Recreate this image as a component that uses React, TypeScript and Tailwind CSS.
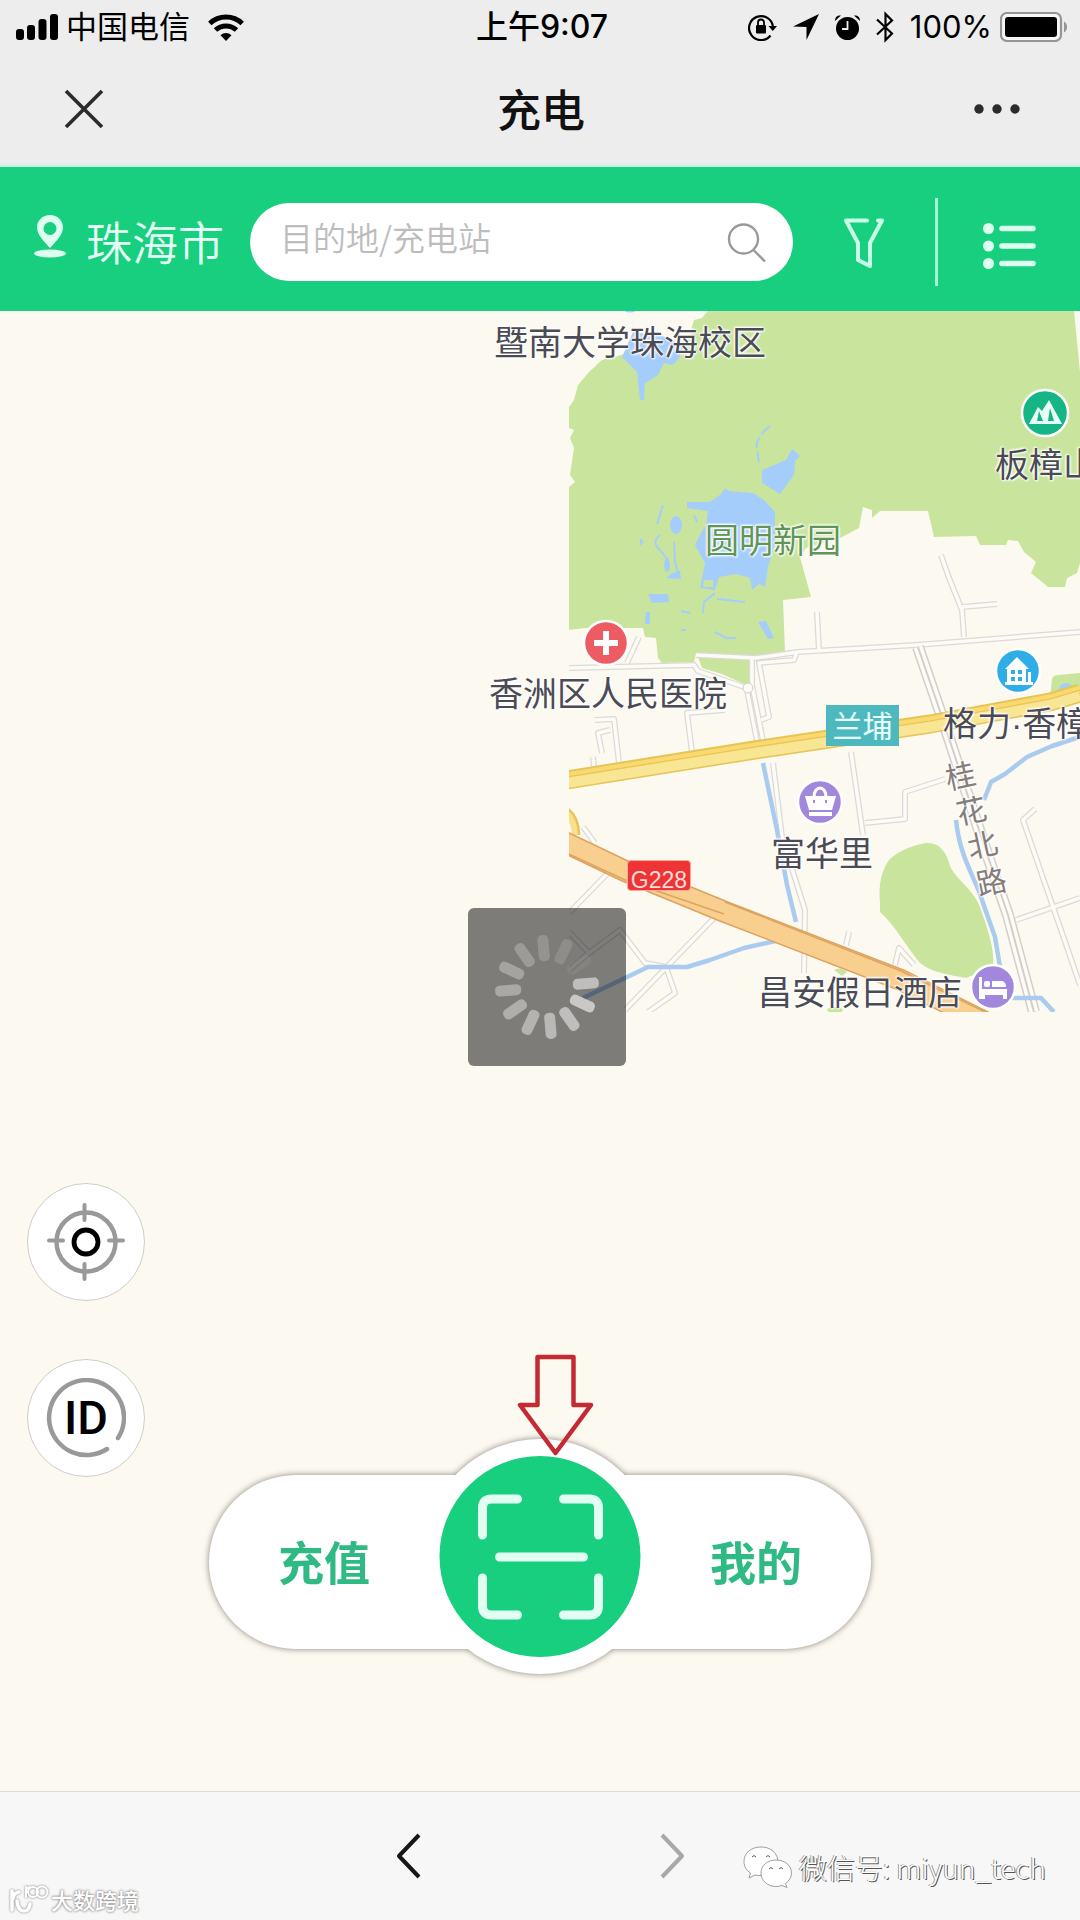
const labelShadow =
  "[text-shadow:0_0_2px_#fff,0_0_3px_#fff,1px_1px_2px_#fff,-1px_-1px_2px_#fff]";

const places = [
  { name: "暨南大学珠海校区", className: "left-[494px] top-[13px] text-[#4b4b55]" },
  { name: "板樟山", className: "left-[995px] top-[135px] text-[#4b4b55]" },
  { name: "圆明新园", className: "left-[705px] top-[211px] text-[#5f9557]" },
  { name: "香洲区人民医院", className: "left-[489px] top-[364px] text-[#4b4b55]" },
  {
    name: "格力·香樟",
    className:
      "left-[943px] top-[396px] font-['Liberation_Sans','Noto_Sans_CJK_SC',sans-serif] text-[#4b4b55]",
  },
  { name: "富华里", className: "left-[771px] top-[524px] text-[#4b4b55]" },
  { name: "昌安假日酒店", className: "left-[758px] top-[663px] text-[#4b4b55]" },
];

const roadName = [
  { char: "桂", className: "left-[945px] top-[448px]" },
  { char: "花", className: "left-[956px] top-[483px]" },
  { char: "北", className: "left-[967px] top-[517px]" },
  { char: "路", className: "left-[976px] top-[554px]" },
];

const streets = [
  "M569 668 L694 665 L698 671 L744 687",
  "M696 655 L756 658 L798 652 L916 645 L1080 632",
  "M752 659 V685 L763 741",
  "M797 652 L794 660 L759 663 L769 717 L761 720",
  "M747 690 L757 741",
  "M817 612 L819 652",
  "M941 555 L949 578 L962 610 L964 637",
  "M962 607 L997 604",
  "M725 710 L687 713 L692 752",
  "M627 663 L639 637",
  "M595 720 L614 719 L619 763",
  "M602 753 L598 733 L610 730",
  "M593 757 L594 767",
  "M851 752 L863 835",
  "M865 823 L905 819 V792 L945 779",
  "M773 763 L782 837 L805 910 L804 973",
  "M1035 809 L1023 820 L1080 985",
  "M1016 920 L1080 898",
  "M608 873 L569 913",
  "M717 915 L625 1010",
  "M569 932 L589 953 L620 930 L645 963 L666 967 L675 993 L648 1012",
  "M589 953 L569 970",
  "M583 827 L595 843",
  "M849 932 L846 945",
  "M895 965 L899 948 L914 965",
];

const petals = [
  { angle: -5, opacity: 0.5 },
  { angle: 25, opacity: 0.58 },
  { angle: 55, opacity: 0.5 },
  { angle: 85, opacity: 0.46 },
  { angle: 115, opacity: 0.42 },
  { angle: 145, opacity: 0.38 },
  { angle: 175, opacity: 0.34 },
  { angle: 205, opacity: 0.3 },
  { angle: 235, opacity: 0.24 },
  { angle: 265, opacity: 0.18 },
  { angle: 295, opacity: 0.13 },
  { angle: 325, opacity: 0.06 },
];

function StatusBar() {
  return (
    <div className="grid h-[54px] grid-cols-[1fr_auto_1fr] items-center pr-3 pl-4 font-['Inter','Noto_Sans_CJK_SC',sans-serif] text-[31px] leading-9 text-black">
      <div className="flex items-center gap-2">
        <svg className="h-[26px] w-[42px]" viewBox="0 0 42 26">
          <rect x="0" y="15" width="8" height="11" rx="3" />
          <rect x="11" y="11" width="8" height="15" rx="3" />
          <rect x="22.500" y="5" width="8" height="21" rx="3" />
          <rect x="34" y="0" width="8" height="26" rx="3" />
        </svg>
        <span>中国电信</span>
        <svg className="ml-2.5 h-[27px] w-9" viewBox="0 0 36 27">
          <g fill="none" stroke="#000" strokeWidth="5">
            <path d="M1.800 9.500a23.500 23.500 0 0 1 32.400 0" />
            <path d="M7.500 16a15.500 15.500 0 0 1 21 0" />
          </g>
          <path d="M18 27l-5.500-5.800a8 8 0 0 1 11 0z" />
        </svg>
      </div>
      <span className="text-[32px] font-medium">上午9:07</span>
      <div className="flex items-center justify-end gap-4">
        <svg className="h-7 w-[29px]" viewBox="0 0 29 28">
          <path
            d="M22.500 22.500A12 12 0 1 1 25 14"
            fill="none"
            stroke="#000"
            strokeWidth="2.200"
          />
          <path d="M20.500 13h8.500l-4.200 5z" />
          <rect x="8" y="12" width="10" height="8.500" rx="1" />
          <path d="M10 13V9.500a3 3 0 0 1 6 0V13" fill="none" stroke="#000" strokeWidth="1.800" />
        </svg>
        <svg className="h-[26px] w-[26px]" viewBox="0 0 26 26">
          <path d="M26 0L13.500 26V13L0 12.500z" />
        </svg>
        <svg className="h-[25px] w-[25px]" viewBox="0 0 25 25">
          <circle cx="12.500" cy="13.500" r="11.500" />
          <path d="M0 6C0 1.500 3 0 6 .5zM25 6C25 1.500 22 0 19 .5z" />
          <path d="M12.500 6v8H7" fill="none" stroke="#ededed" strokeWidth="1.800" />
        </svg>
        <svg className="h-8 w-[18px]" viewBox="0 0 18 32">
          <path
            d="M1 8.500l15 14L9.500 29V3L16 9.500l-15 14"
            fill="none"
            stroke="#000"
            strokeWidth="2.200"
          />
        </svg>
        <div className="flex items-center gap-2">
          <span>100%</span>
          <svg className="h-[30px] w-[68px]" viewBox="0 0 68 30">
            <rect x="1" y="1" width="60" height="28" rx="6" fill="#f6f6f6" stroke="#959595" strokeWidth="2.200" />
            <rect x="5" y="5" width="52" height="20" rx="3" />
            <path d="M64 9.500c4 2 4 9 0 11z" fill="#959595" />
          </svg>
        </div>
      </div>
    </div>
  );
}

function TitleBar() {
  return (
    <div className="grid h-[110px] grid-cols-[1fr_auto_1fr] items-center pr-[60px] pl-[62px]">
      <button aria-label="关闭" className="justify-self-start">
        <svg className="h-[44px] w-[44px]" viewBox="0 0 44 44" stroke="#2b2b2b" strokeWidth="3.600">
          <path d="M4 4l36 36M40 4L4 40" />
        </svg>
      </button>
      <h1 className="pb-0.5 text-[44px] leading-[54px] font-medium text-[#111]">充电</h1>
      <button aria-label="更多" className="justify-self-end">
        <svg className="h-[44px] w-[46px]" viewBox="0 0 46 44" fill="#2b2b2b">
          <circle cx="5" cy="22" r="4.700" />
          <circle cx="23" cy="22" r="4.700" />
          <circle cx="41" cy="22" r="4.700" />
        </svg>
      </button>
    </div>
  );
}

function SearchBar() {
  return (
    <div className="flex h-[147px] items-center border-t-3 border-[#cdf5e4] bg-[#18cf80] pt-1.5 pr-11 pl-[34px]">
      <button className="flex items-center gap-5 pb-1 text-[46px] leading-[54px] font-[350] text-[#e4fff3]">
        <svg className="mb-2 h-[43px] w-8" viewBox="0 0 32 43" fill="#dcfff0">
          <path
            fillRule="evenodd"
            d="M16 0C8.500 0 3 5.500 3 12.500 3 20 10.500 27 16 33c5.500-6 13-13 13-20.500C29 5.500 23.500 0 16 0zm0 7a6.500 6.500 0 1 1 0 13 6.500 6.500 0 0 1 0-13z"
          />
          <ellipse cx="16" cy="38.500" rx="16" ry="4" />
        </svg>
        珠海市
      </button>
      <form className="ml-[26px] flex h-[78px] min-w-0 flex-1 items-center rounded-full bg-white pr-[26px] pl-[30px]">
        <input
          aria-label="目的地/充电站"
          placeholder="目的地/充电站"
          className="mb-2.5 min-w-0 flex-1 bg-transparent text-[33px] leading-10 font-[350] text-gray-700 outline-none placeholder:text-[#bdbdbd]"
        />
        <button type="button" aria-label="搜索">
          <svg className="h-10 w-10" viewBox="0 0 40 40" fill="none" stroke="#999" strokeWidth="2.400">
            <circle cx="16.500" cy="17" r="14.500" />
            <path d="M26.500 28L38 39.500" />
          </svg>
        </button>
      </form>
      <button aria-label="筛选" className="ml-[51px]">
        <svg
          className="h-[52px] w-10"
          viewBox="0 0 40 52"
          fill="none"
          stroke="#c9ffe8"
          strokeWidth="4"
          strokeLinejoin="round"
          strokeLinecap="round"
        >
          <path d="M23 4.500H2L14 27V44L26 50V27L38 4.500H34" />
        </svg>
      </button>
      <div className="ml-[51px] h-[88px] w-[3px] bg-[#a6f5d3]" />
      <button aria-label="列表" className="ml-[45px]">
        <svg
          className="mt-2 h-[46px] w-[53px]"
          viewBox="0 0 53 46"
          fill="#dcfff0"
          stroke="#dcfff0"
          strokeWidth="5.500"
          strokeLinecap="round"
        >
          <path d="M19 5.500H50M19 23H50M19 40.500H50" />
          <g stroke="none">
            <circle cx="5.500" cy="5.500" r="5.500" />
            <circle cx="5.500" cy="23" r="5.500" />
            <circle cx="5.500" cy="40.500" r="5.500" />
          </g>
        </svg>
      </button>
    </div>
  );
}

function MapTile() {
  return (
    <svg className="absolute top-0 left-[569px] h-[701px] w-[511px]" viewBox="569 311 511 701">
      <g fill="#c9e59d">
        <path d="M708 311L702 318 694 320 688 340 640 350 602 360 589 372 578 385 574 400 569 407V428L574 430 570 438 574 448 570 475 575 482 569 487V630L585 628H643L645 637 656 638 658 658 662 663 694 662 696 653 756 657 785 652 783 600 811 597 800 557 806 548 840 538 859 528 863 507 872 510 872 518 880 511H928L934 537 976 536 980 545H1006L1008 540 1018 541 1024 552 1036 562 1031 573 1048 587H1065L1067 578 1077 573 1080 563V372L1074 311Z" />
        <path d="M698 657L752 659V683L744 684 722 674 702 668Z" />
        <path d="M880 903C878 885 882 868 890 859 900 850 915 844 928 843 940 843 947 853 950 866 956 880 975 890 981 910 988 930 995 950 993 967L966 978C950 975 930 972 920 963 905 945 895 925 880 912Z" />
        <path d="M1052 679Q1053 675 1058 675L1080 673V696L1050 698Z" />
        <path d="M834 970Q840 966 847 972L842 976Z" />
        <ellipse cx="835" cy="1010" rx="8" ry="3" />
      </g>
      <g fill="#a5cdfc">
        <path d="M622 357L637 372 640 400H644L645 383 658 375 664 363 673 365 679 358 684 347 667 337 633 332Z" />
        <path d="M624 311H636Q630 314 624 311Z" />
        <path d="M762 470L786 460 792 449 800 456 795 461 794 475 780 494 762 483Z" />
        <path d="M687 502H710L721 494 725 488 729 491 753 493 764 500 775 512V545L768 567 765 587 759 584 752 590 750 578 736 574 719 577 715 590 700 588 705 563 695 545 701 533 706 525 708 511 687 508Z" />
        <ellipse cx="676" cy="525" rx="6" ry="9" />
        <path d="M648 594H668L669 602 652 603Z" />
        <path d="M646 612H650V624H645ZM758 622L766 621 774 638 768 639Z" />
        <path d="M640 538L644 542 640 546ZM672 573L680 571 681 579 666 578Z" />
        <ellipse cx="667" cy="565" rx="3" ry="7" />
        <ellipse cx="1066" cy="689" rx="7" ry="6" />
      </g>
      <path d="M704 580H713V587H703Z" fill="#c9e59d" />
      <g fill="none" stroke="#a5cdfc" strokeWidth="2">
        <path d="M770 426C760 434 755 442 757 450L759 462" strokeDasharray="12 3" />
        <path d="M663 505L657 524M674 542L675 562 678 572M660 535Q651 542 660 550L668 560" />
        <path d="M715 593L704 602 703 613M717 599L745 602M681 611L690 613M681 630H686M715 632L726 638H736" />
        <path d="M694 515L697 522" />
      </g>

      <g fill="none" strokeLinejoin="round">
        {streets.map((d) => (
          <path key={d} d={d} stroke="#dcd9d6" strokeWidth="6" />
        ))}
        {streets.map((d) => (
          <path key={d} d={d} stroke="#fdfbf6" strokeWidth="3.500" />
        ))}
        <path d="M918 647L943 720 984 845 1008 915 1034 1012" stroke="#d2ceca" strokeWidth="12" />
        <path d="M918 647L943 720 984 845 1008 915 1034 1012" stroke="#fdfbf6" strokeWidth="9" />
        <path d="M918 647L943 720 984 845 1008 915 1034 1012" stroke="#d2ceca" strokeWidth="2" />
        <circle cx="748" cy="688" r="5" fill="#fdfbf6" stroke="#d2ceca" />
      </g>

      <g fill="none" stroke="#aacbf0" strokeWidth="4.500" strokeLinejoin="round">
        <path d="M763 763L777 830 787 885 796 922" />
        <path d="M780 940L744 948 710 960 687 967H648L625 978 583 998" />
        <path d="M1080 737L1052 746 1027 757 1005 774 991 782 984 800" />
        <path d="M956 820C960 860 977 880 983 903L995 937 1000 967" />
        <path d="M1012 998H1041L1054 1012" />
      </g>

      <g fill="none" strokeLinejoin="round">
        <path d="M560 806Q577 812 578 835" stroke="#e8c45c" strokeWidth="5" />
        <path d="M560 809Q574 815 575 835" stroke="#f8e08c" strokeWidth="6" />
        <path d="M560 781L761 749 930 724 1050 702 1080 693" stroke="#e6c557" strokeWidth="19" />
        <path d="M560 777L761 745 930 720 1050 698 1080 689" stroke="#fbd971" strokeWidth="7" />
        <path d="M560 784L761 752 930 727 1050 705 1080 696" stroke="#f9e694" strokeWidth="10" />
        <path d="M560 778L761 746 930 721 1050 699 1080 690" stroke="#e6c557" strokeWidth="1.200" />
        <path d="M560 840L625 871 725 912 901 980 985 1022" stroke="#dda35f" strokeWidth="22" />
        <path d="M560 840L625 871 725 912 901 980 985 1022" stroke="#f8cf8f" strokeWidth="19" />
        <path d="M560 850L625 880 724 914M725 902L901 971 985 1012" stroke="#dda35f" strokeWidth="1.500" />
      </g>

      <g stroke="#fff" strokeWidth="2.500">
        <circle cx="606" cy="643" r="22" fill="#ee5c63" />
        <circle cx="1045" cy="413" r="23" fill="#16b585" />
        <circle cx="1018" cy="671" r="22" fill="#2fade6" />
        <circle cx="820" cy="802" r="22" fill="#a188dd" />
        <circle cx="993" cy="987" r="22" fill="#a188dd" />
      </g>
      <path d="M603 631h6v9h9v6h-9v9h-6v-9h-9v-6h9z" fill="#fff" />
      <path
        fillRule="evenodd"
        d="M1029 424L1038 407 1042 411 1049 400 1062 424ZM1039 411L1037 421H1043ZM1050 408L1048 421H1054Z"
        fill="#e8fff7"
      />
      <path
        fillRule="evenodd"
        d="M1017 657L1029 669H1026V682H1028V672H1031V682H1033V685H1005V682H1007V669H1005ZM1011 670V674H1015V670ZM1018 670V674H1022V670ZM1011 677V681H1015V677ZM1018 677V681H1022V677Z"
        fill="#fff"
      />
      <path d="M805 796H836L832 810H809ZM809 812H832V816H809Z" fill="#fff" />
      <path d="M814 797C814 785 826 785 826 797" fill="none" stroke="#fff" strokeWidth="3" />
      <path d="M814 800v3M826 800v3" stroke="#a188dd" strokeWidth="2" />
      <path d="M979 977h3v12h25v10h-4v-4h-18v4h-6z" fill="#fff" />
      <rect x="984" y="981" width="6" height="6" rx="2" fill="#fff" />
      <path d="M992 981h10q4 1 4 6h-14z" fill="#fff" />
    </svg>
  );
}

function Spinner() {
  return (
    <div
      role="status"
      aria-label="加载中"
      className="absolute top-[597px] left-[468px] size-[158px] rounded-md bg-black/50"
    >
      <svg className="size-full" viewBox="-79 -79 158 158" fill="#fff">
        {petals.map(({ angle, opacity }) => (
          <rect
            key={angle}
            x="26"
            y="-5.500"
            width="26"
            height="11"
            rx="4.500"
            opacity={opacity}
            transform={`rotate(${angle})`}
          />
        ))}
      </svg>
    </div>
  );
}

function SideButtons() {
  return (
    <div className="absolute bottom-[314px] left-[27px] flex flex-col gap-[58px]">
      <button
        aria-label="定位"
        className="flex size-[118px] items-center justify-center rounded-full border border-[#cfcdc9] bg-white"
      >
        <svg className="size-20" viewBox="-40 -40 80 80" fill="none" strokeLinecap="round">
          <circle r="29.500" stroke="#999" strokeWidth="4.500" />
          <path
            d="M-1.500 -37V-22M-1.500 22V37M-37 -1.500H-23M23 -1.500H37"
            stroke="#999"
            strokeWidth="4"
          />
          <circle r="12" stroke="#000" strokeWidth="4.800" />
        </svg>
      </button>
      <button className="relative flex size-[118px] items-center justify-center rounded-full border border-[#cfcdc9] bg-white">
        <svg
          className="absolute size-20"
          viewBox="-40 -40 80 80"
          fill="none"
          stroke="#999"
          strokeWidth="4.500"
          strokeLinecap="round"
        >
          <path d="M32 20A37.500 37.500 0 1 0 21 31" />
        </svg>
        <span className="font-['Roboto',sans-serif] text-[47px] leading-[54px] font-medium text-black">
          ID
        </span>
      </button>
    </div>
  );
}

function ActionPill() {
  return (
    <div className="absolute bottom-[117px] left-1/2 flex h-[235px] w-[662px] -translate-x-1/2 items-center drop-shadow-[0_0_3px_rgba(60,50,50,0.6)]">
      <div className="mt-2.5 flex h-[174px] w-full items-center justify-between rounded-full bg-white text-[46px] leading-[54px] font-bold text-[#2fba84]">
        <button className="h-full w-[230px] rounded-l-full pb-1">充值</button>
        <button className="h-full w-[230px] rounded-r-full pb-1">我的</button>
      </div>
      <button
        aria-label="扫码"
        className="absolute top-0 left-1/2 flex size-[235px] -translate-x-1/2 items-center justify-center rounded-full border-17 border-white bg-[#18cf80]"
      >
        <svg
          className="size-[126px]"
          viewBox="0 0 126 126"
          fill="none"
          stroke="#e0fff2"
          strokeWidth="9"
          strokeLinecap="round"
        >
          <path d="M5 41V14Q5 5 14 5H40M86 5H112Q121 5 121 14V41M5 84V112Q5 121 14 121H40M86 121H112Q121 121 121 112V84M22 63H106" />
        </svg>
      </button>
    </div>
  );
}

function MapView() {
  return (
    <main className="relative flex-1 overflow-hidden bg-[#fcf9f0]">
      <MapTile />
      {places.map((place) => (
        <span
          key={place.name}
          className={`absolute text-[34px] leading-[34px] whitespace-nowrap ${labelShadow} ${place.className}`}
        >
          {place.name}
        </span>
      ))}
      {roadName.map(({ char, className }) => (
        <span
          key={char}
          className={`absolute -rotate-12 text-[30px] leading-[30px] text-[#857d7a] ${labelShadow} ${className}`}
        >
          {char}
        </span>
      ))}
      <span className="absolute top-[394px] left-[826px] flex h-[41px] w-[73px] items-center justify-center bg-[#4db9be] pb-1 text-[30px] leading-[30px] text-[#e6ffff]">
        兰埔
      </span>
      <span className="absolute top-[549px] left-[627px] flex h-[31px] w-16 items-end justify-center rounded-sm border border-[#f9a9a0] bg-[#ee3434] font-['Liberation_Sans',sans-serif] text-[23px] leading-5 text-[#ffdcdc]">
        G228
      </span>
      <Spinner />
      <SideButtons />
      <ActionPill />
      <svg
        className="absolute bottom-[334px] left-[517px] h-[104px] w-[77px]"
        viewBox="517 1353 77 104"
        fill="none"
        stroke="#c42a33"
        strokeWidth="4.500"
        strokeLinejoin="round"
      >
        <path d="M537.500 1357H573.500V1405H591L555.500 1453L520 1405H537.500Z" />
      </svg>
    </main>
  );
}

function BottomBar() {
  return (
    <footer className="relative flex h-[129px] items-center justify-center gap-[219px] border-t border-[#dddcd9] bg-[#f7f7f7]">
      <button aria-label="后退">
        <svg className="h-12 w-11" viewBox="0 0 44 48" fill="none" stroke="#161616" strokeWidth="4">
          <path d="M32 3L12 24L32 45" strokeLinejoin="round" />
        </svg>
      </button>
      <button aria-label="前进">
        <svg className="h-12 w-11" viewBox="0 0 44 48" fill="none" stroke="#a8a8a8" strokeWidth="4">
          <path d="M12 3L32 24L12 45" strokeLinejoin="round" />
        </svg>
      </button>
      <div className="absolute right-[34px] bottom-8 flex items-center gap-1.5 text-[28px] leading-10 font-light text-white [text-shadow:1px_1px_0_#555,-1px_0_0_#999]">
        <svg className="h-[42px] w-[50px]" viewBox="0 0 50 42" fill="#fff" stroke="#888" strokeWidth="0.800">
          <path d="M18 1C8 1 1 7 1 15.500c0 5 2.500 9 6.500 11.500L6 32l6-3c8 2 21-1 23-12C35 7 28 1 18 1z" />
          <path d="M33 14c-8 0-15 5-15 13s7 13.500 15 13.500c2 0 4-.5 6-1l5 2-1.500-4c3.500-2.500 6-6 6-10.500 0-8-7-13-15.500-13z" />
          <path d="M9 11q2-3 4 0M23 11q2-3 4 0M26 23q2-3 4 0M36 23q2-3 4 0" stroke="#333" fill="none" />
        </svg>
        <span>微信号: miyun_tech</span>
      </div>
      <div className="absolute bottom-[5px] left-[9px] flex items-center gap-0.5 text-[22px] leading-8 font-medium text-white [text-shadow:0_0_2px_#888,0_0_3px_#888]">
        <svg
          className="h-[30px] w-10 drop-shadow-[0_0_1px_#777]"
          viewBox="0 0 40 30"
          fill="none"
          stroke="#fff"
          strokeLinecap="round"
        >
          <path d="M3 7V26M10 8Q4 9 4 15M8 17Q9 27 15 27 20 27 21 20" strokeWidth="3.500" />
          <path d="M17 3V13M17 6Q19 3 21 3" strokeWidth="2" />
          <circle cx="24" cy="8" r="5" strokeWidth="2" />
          <circle cx="33" cy="8" r="5.500" strokeWidth="2" />
        </svg>
        <span>大数跨境</span>
      </div>
    </footer>
  );
}

export default function App() {
  return (
    <div className="flex min-h-screen flex-col overflow-hidden bg-[#ededed] font-['Noto_Sans_CJK_SC',sans-serif]">
      <header>
        <StatusBar />
        <TitleBar />
        <SearchBar />
      </header>
      <MapView />
      <BottomBar />
    </div>
  );
}
